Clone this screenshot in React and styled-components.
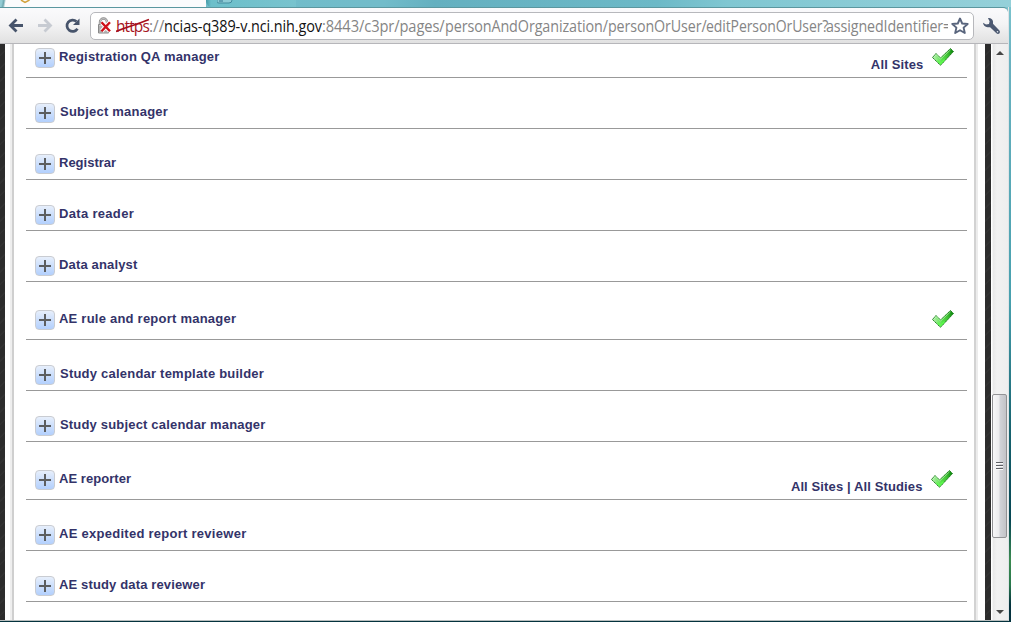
import React from 'react';
import styled, { createGlobalStyle, css } from 'styled-components';

const GlobalStyle = createGlobalStyle`
  * { box-sizing: border-box; }
  body { margin: 0; overflow: hidden; background: #10525d; }
`;

const Desktop = styled.div`
  width: 1011px;
  height: 622px;
  display: flex;
  flex-direction: column;
  overflow: hidden;
  background: linear-gradient(180deg, #7cc5cf 0, #69b2c0 60px, #47a0ae 300px, #17636f 430px, #064653 520px, #3b8a50 560px, #29784c 585px, #04323e 605px, #04323e 100%);
`;

const TabStrip = styled.div`
  height: 7px;
  flex: none;
  display: flex;
  background: linear-gradient(100deg, #70bdca 0 12%, #72bcca 38%, #64b0c0 43%, #6cb9c7 65%, #80c7d2 72%, #94d0d9 100%);
`;

const ActiveTab = styled.div`
  width: 206px;
  height: 7px;
  padding-left: 18px;
  background: linear-gradient(100deg, #94ccd5 0 2px, #6da7af 4px, #fbfbfc 6px);
  svg { display: block; }
`;

const InactiveTab = styled.div`
  width: 90px;
  height: 7px;
  padding-left: 11px;
  background: linear-gradient(90deg, #479aa7, #6cbfca 5px, #78c3ce);
  border-bottom-left-radius: 6px;
  svg { display: block; }
`;

const BrowserWindow = styled.div`
  width: 1009px;
  height: 614px;
  display: flex;
  flex-direction: column;
  border-right: 1px solid #dfe3e6;
  border-bottom: 1px solid #b8bebe;
`;

const Toolbar = styled.div`
  height: 37px;
  flex: none;
  display: flex;
  align-items: center;
  border-top: 1px solid #5b979f;
  border-bottom: 1px solid #b6b6ba;
  background: linear-gradient(#fafafc, #f4f4f5 45%, #e1e1e1);
  border-top-right-radius: 5px;
`;

const NavButtons = styled.div`
  width: 90px;
  height: 28px;
  flex: none;
  svg { display: block; }
`;

const AddressBar = styled.div`
  width: 884px;
  height: 28px;
  flex: none;
  display: flex;
  align-items: center;
  padding-left: 6px;
  border: 1px solid #b7b8bc;
  border-radius: 5px;
  background: #fff;
  svg { flex: none; }
`;

const Url = styled.div`
  width: 832px;
  height: 26px;
  margin: 0 3px 0 4px;
  flex: none;
  display: flex;
  overflow: hidden;
  white-space: nowrap;
  font: 15.5px/26px "Open Sans", "Noto Sans", sans-serif;
  color: #858585;
`;

const UrlPart = styled.span`
  flex: none;
  width: ${p => p.$width}px;
  letter-spacing: ${p => p.$spacing ?? -0.1}px;
  color: ${p => p.$color || '#858585'};
  transform: scaleX(${p => p.$stretch || 1});
  transform-origin: left;
`;

const Scheme = styled(UrlPart)`
  position: relative;
  svg { position: absolute; left: -1px; top: 3px; }
`;

const Page = styled.div`
  height: 576px;
  flex: none;
  display: flex;
  background: #fff;
`;

const Backdrop = styled.div`
  width: ${p => p.$width}px;
  flex: none;
  background: repeating-linear-gradient(135deg, #2c2c2c 0 7px, #323232 8px 9px);
`;

const Sheet = styled.main`
  width: 980px;
  display: flex;
  flex: none;
  background: #fff;
`;

const SheetEdge = styled.div`
  width: ${p => p.$right ? 18 : 21}px;
  flex: none;
  background: ${p => p.$right
    ? 'linear-gradient(90deg, #fff 0 7px, #d2d2d2 7px 9px, #ececec 9px 11px, #fff 11px)'
    : 'linear-gradient(90deg, #fff 0 5px, #eee 5px 7px, #cfcfcf 7px 9px, #fff 9px)'};
`;

const RoleList = styled.div`
  width: 941px;
  flex: none;
  overflow: hidden;
`;

const RoleRow = styled.div`
  height: 51px;
  padding: 25px 0 0 9px;
  display: flex;
  align-items: flex-start;
  border-bottom: 1px solid #999;
  ${p => p.$tall && css`
    height: 58px;
    padding-top: 28px;
  `}
  ${p => p.$cut && css`
    height: 34px;
    padding-top: 4px;
  `}
`;

const ExpandButton = styled.button`
  width: 20px;
  height: 20px;
  flex: none;
  padding: 0;
  border: 1px solid #c9ccd2;
  border-radius: 4px;
  background: linear-gradient(#e7effb, #cee0fc 45%, #b3d0fd);
  svg { display: block; }
`;

const RoleName = styled.span`
  margin-left: ${p => p.$indent}px;
  font: bold 13px/18px "Liberation Sans", Arial, sans-serif;
  letter-spacing: ${p => p.$spacing ?? 0.18}px;
  color: #333369;
  white-space: nowrap;
`;

const Scope = styled(RoleName)`
  margin: 8px 7.5px 0 auto;
`;

const CheckSlot = styled.div`
  width: 24px;
  height: 20px;
  flex: none;
  margin: -1px ${p => p.$inset}px 0 ${p => p.$alone ? 'auto' : 0};
  svg { display: block; }
`;

const Scrollbar = styled.div`
  width: 17px;
  flex: none;
  display: flex;
  flex-direction: column;
  align-items: center;
  background: linear-gradient(90deg, #fff 0 1px, #e8e8e8 2px, #f1f1f1 6px, #eee);
`;

const ScrollArrow = styled.div`
  height: 17px;
  padding: 7px 0 0 1px;
  svg { display: block; }
`;

const ScrollTrack = styled.div`
  height: 542px;
  padding-top: 333px;
`;

const ScrollThumb = styled.div`
  width: 15px;
  height: 144px;
  display: flex;
  align-items: center;
  padding: 0 0 1px 3px;
  border: 1px solid #929295;
  border-radius: 2px;
  background: linear-gradient(90deg, #f7f7f8, #ebebed 6px, #d2d3d8 7px, #c2c3c7);
`;

const Favicon = () => (
  <svg width="16" height="7"><path d="M3 0l4 2.5L11.500 0" fill="none" stroke="#d2a23c" strokeWidth="1.5" /></svg>
);

const TabIcon = () => (
  <svg width="18" height="7"><path d="M0 0v2q0 1 2 1h10q3 0 3-3" fill="#8dcbd5" stroke="#438b9d" /><path d="M2 1h4" stroke="#32758e" /></svg>
);

const NavigationIcons = () => (
  <svg width="90" height="28" fill="none">
    <g strokeWidth="2.8">
      <path d="M23 13.500H11.500M16.500 7.500l-6 6 6 6" stroke="#47546b" />
      <path d="M38 13.500h12M44.500 7.500l6 6-6 6" stroke="#c7cbd2" />
    </g>
    <path d="M77.500 16.800A5.700 5.700 0 1 1 76.500 9.500" stroke="#47546b" strokeWidth="2.7" />
    <path d="M79.500 6.500v6.500H73z" fill="#47546b" />
  </svg>
);

const BrokenLock = () => (
  <svg width="15" height="18" viewBox="0 0 15 18" fill="none">
    <path d="M3 8V5a3.500 3.500 0 0 1 7 0v3" stroke="#8d8d8d" strokeWidth="2.4" />
    <path d="M3 8V5a3.500 3.500 0 0 1 7 0v3" stroke="#d6d6d6" strokeWidth=".8" />
    <path d="M1.500 7.500h10v8.500h-10z" fill="#c9c9c9" stroke="#898989" />
    <path d="M2 10h9M2 12h9M2 14h9" stroke="#9a9a9a" />
    <path d="M4.700 5.500l8 8.500M12.700 5.500l-8 8.500" stroke="#fff" strokeWidth="4.200" />
    <path d="M4.500 5.300l8.500 9M13 5.300l-8.500 9" stroke="#ce1019" strokeWidth="2.400" />
  </svg>
);

const Star = () => (
  <svg width="18" height="18" viewBox="0 0 18 18">
    <path d="M9 1.500l2.200 5 5.500.5-4.100 3.600 1.200 5.400L9 13.200 4.200 16l1.200-5.400L1.300 7l5.500-.5z" fill="#fff" stroke="#59657d" strokeWidth="1.900" strokeLinejoin="round" />
  </svg>
);

const Wrench = styled.svg`
  margin-left: 7px;
`;

const Plus = () => (
  <svg width="18" height="18"><path d="M9 3v12M3 9h12" stroke="#5c5e60" strokeWidth="2" /></svg>
);

const Check = () => (
  <svg width="24" height="20" viewBox="0 0 24 20">
    <defs>
      <linearGradient id="checkFill" x1="0" y1=".3" x2="1" y2=".2">
        <stop offset="0" stopColor="#b6efb0" />
        <stop offset=".4" stopColor="#59e34c" />
        <stop offset=".7" stopColor="#3fc034" />
        <stop offset="1" stopColor="#078108" />
      </linearGradient>
    </defs>
    <path d="M1.500 10.500l3.500-4 4.500 4.500L19.500 1.500 22.500 4.500 9.500 18.300z" fill="url(#checkFill)" stroke="#1d7f1d" strokeDasharray="1.8 .4" />
    <path d="M3 10l2.200-2.300 4.300 4.400 10-9.300" fill="none" stroke="#d5f7cf" strokeWidth=".9" opacity=".6" />
    <path d="M6.500 13.500l3 3.100 4-4.100" fill="none" stroke="#5cff4c" strokeWidth="1.200" />
  </svg>
);

const Grip = () => (
  <svg width="7" height="9"><path d="M0 1.500h7M0 4.500h7M0 7.500h7" stroke="#5e6065" /><path d="M0 2.500h7M0 5.500h7M0 8.500h7" stroke="#fafafa" /></svg>
);

const roles = [
  { name: 'Registration QA manager', scope: 'All Sites', checked: true, cut: true, inset: 12, scopeSpacing: 0.15 },
  { name: 'Subject manager', indent: 5, spacing: 0.22 },
  { name: 'Registrar', spacing: 0 },
  { name: 'Data reader', spacing: 0.32 },
  { name: 'Data analyst', spacing: 0.15 },
  { name: 'AE rule and report manager', checked: true, inset: 12, spacing: 0.23 },
  { name: 'Study calendar template builder', indent: 5, spacing: 0.22 },
  { name: 'Study subject calendar manager', indent: 5, spacing: 0.18 },
  { name: 'AE reporter', scope: 'All Sites | All Studies', checked: true, inset: 13, spacing: 0.05, scopeSpacing: 0.12 },
  { name: 'AE expedited report reviewer', spacing: 0.27 },
  { name: 'AE study data reviewer', spacing: 0.14 },
];

const Role = ({ role }) => (
  <RoleRow $tall={role.checked} $cut={role.cut}>
    <ExpandButton aria-label={`Expand ${role.name}`}><Plus /></ExpandButton>
    <RoleName $indent={role.indent || 4} $spacing={role.spacing}>{role.name}</RoleName>
    {role.scope && <Scope $spacing={role.scopeSpacing}>{role.scope}</Scope>}
    {role.checked && <CheckSlot $inset={role.inset} $alone={!role.scope}><Check /></CheckSlot>}
  </RoleRow>
);

export default function App() {
  return (
    <Desktop>
      <GlobalStyle />
      <TabStrip>
        <ActiveTab><Favicon /></ActiveTab>
        <InactiveTab><TabIcon /></InactiveTab>
      </TabStrip>
      <BrowserWindow>
        <Toolbar>
          <NavButtons><NavigationIcons /></NavButtons>
          <AddressBar>
            <BrokenLock />
            <Url>
              <Scheme $width={33} $spacing={-0.9} $color="#a61524">
                https
                <svg width="36" height="18"><path d="M1 15.500Q8 12.500 16 10T34 3.500" fill="none" stroke="#a80f1c" strokeWidth="1.800" /></svg>
              </Scheme>
              <UrlPart $width={15} $spacing={0}>://</UrlPart>
              <UrlPart $width={158} $stretch={0.931} $color="#111">ncias-q389-v.nci.nih.gov</UrlPart>
              <UrlPart $width={123} $stretch={0.946}>:8443/c3pr/pages/</UrlPart>
              <UrlPart $width={163} $stretch={0.926}>personAndOrganization/</UrlPart>
              <UrlPart $width={98} $stretch={0.919}>personOrUser/</UrlPart>
              <UrlPart $width={120} $stretch={0.904}>editPersonOrUser?</UrlPart>
              <UrlPart $width={122} $stretch={0.92}>assignedIdentifier=</UrlPart>
            </Url>
            <Star />
          </AddressBar>
          <Wrench width="20" height="20" viewBox="0 0 20 20">
            <path d="M7 2.200C8.800 1.500 11.800 3 12 5.500c.1 1-.2 2 .2 2.600l6 6.200c2 2.100-.7 4.900-2.800 2.900l-6-5.800c-.8-.5-1.700-.1-2.800-.2C4 11 2 9 2 6.800l3 1.700 3-.5.600-2.800z" fill="#4c5971" />
            <circle cx="16.500" cy="15.700" r=".8" fill="#e8ecf1" />
          </Wrench>
        </Toolbar>
        <Page>
          <Backdrop $width={5} />
          <Sheet>
            <SheetEdge />
            <RoleList>{roles.map(role => <Role key={role.name} role={role} />)}</RoleList>
            <SheetEdge $right />
          </Sheet>
          <Backdrop $width={6} />
          <Scrollbar>
            <ScrollArrow><svg width="8" height="4"><path d="M0 4l4-4 4 4z" fill="#454545" /></svg></ScrollArrow>
            <ScrollTrack><ScrollThumb><Grip /></ScrollThumb></ScrollTrack>
            <ScrollArrow><svg width="8" height="4"><path d="M0 0h8L4 4z" fill="#454545" /></svg></ScrollArrow>
          </Scrollbar>
        </Page>
      </BrowserWindow>
    </Desktop>
  );
}
